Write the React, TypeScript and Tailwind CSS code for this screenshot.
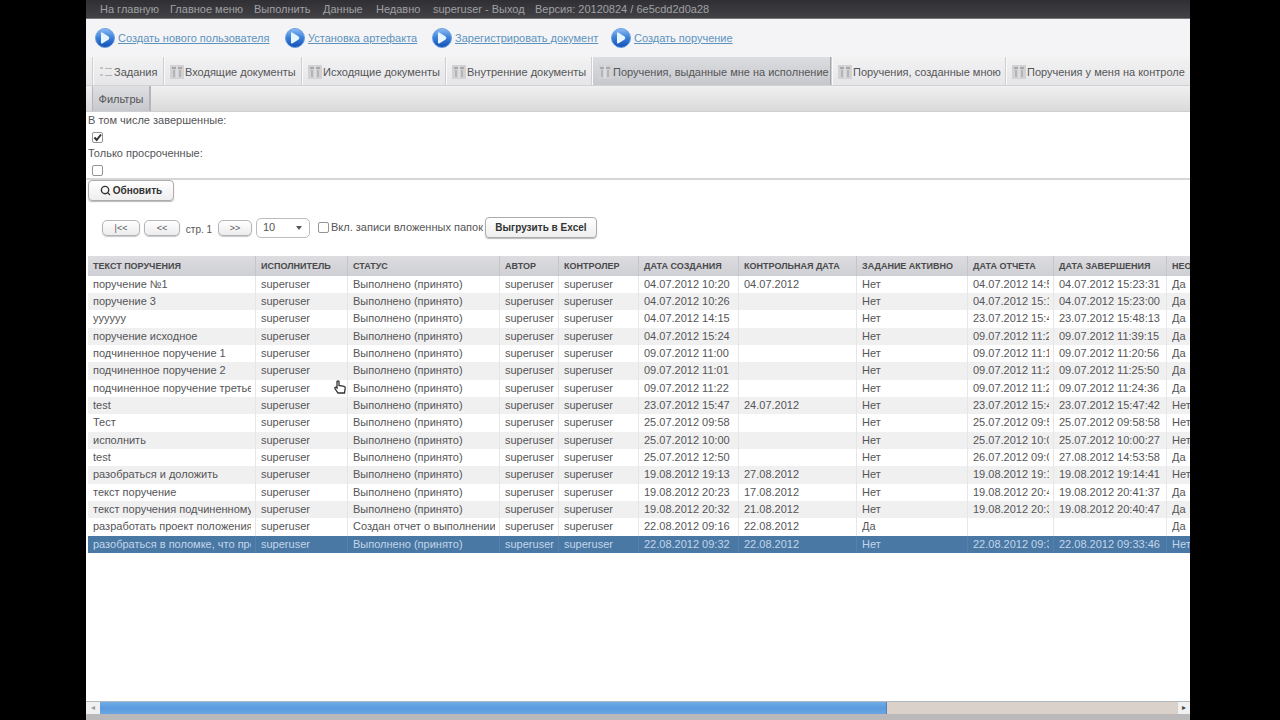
import React from 'react';
import { Search } from 'lucide-react';
import clsx from 'clsx';

const menuItems = [
  { label: 'На главную', width: 'w-[70px]' },
  { label: 'Главное меню', width: 'w-[84px]' },
  { label: 'Выполнить', width: 'w-[69px]' },
  { label: 'Данные', width: 'w-[53px]' },
  { label: 'Недавно', width: 'w-[57px]' },
  { label: 'superuser - Выход', width: 'w-[102px]' },
];

const actions = [
  { label: 'Создать нового пользователя', width: 'w-[190px]' },
  { label: 'Установка артефакта', width: 'w-[147px]' },
  { label: 'Зарегистрировать документ', width: 'w-[179px]' },
  { label: 'Создать поручение', width: 'w-[160px]' },
];

const tabs = [
  { label: 'Задания', width: 'w-[71px]', icon: 'list' },
  { label: 'Входящие документы', width: 'w-[138px]', icon: 'grid' },
  { label: 'Исходящие документы', width: 'w-[144px]', icon: 'grid' },
  { label: 'Внутренние документы', width: 'w-[146px]', icon: 'grid' },
  { label: 'Поручения, выданные мне на исполнение', width: 'w-[240px]', icon: 'grid', active: true },
  { label: 'Поручения, созданные мною', width: 'w-[174px]', icon: 'grid' },
  { label: 'Поручения у меня на контроле', width: 'w-[185px]', icon: 'grid' },
];

const columns = [
  { label: 'ТЕКСТ ПОРУЧЕНИЯ', width: 'w-[168px]' },
  { label: 'ИСПОЛНИТЕЛЬ', width: 'w-[92px]' },
  { label: 'СТАТУС', width: 'w-[152px]' },
  { label: 'АВТОР', width: 'w-[59px]' },
  { label: 'КОНТРОЛЕР', width: 'w-[80px]' },
  { label: 'ДАТА СОЗДАНИЯ', width: 'w-[100px]' },
  { label: 'КОНТРОЛЬНАЯ ДАТА', width: 'w-[118px]' },
  { label: 'ЗАДАНИЕ АКТИВНО', width: 'w-[111px]' },
  { label: 'ДАТА ОТЧЕТА', width: 'w-[86px]' },
  { label: 'ДАТА ЗАВЕРШЕНИЯ', width: 'w-[113px]' },
  { label: 'НЕОБХОДИМ ОТЧЕТ', width: 'w-[121px]' },
];

const done = 'Выполнено (принято)';

// text, status, created, control date, active, reported, finished, report required
const rows = [
  ['поручение №1', done, '04.07.2012 10:20', '04.07.2012', 'Нет', '04.07.2012 14:58', '04.07.2012 15:23:31', 'Да'],
  ['поручение 3', done, '04.07.2012 10:26', '', 'Нет', '04.07.2012 15:19', '04.07.2012 15:23:00', 'Да'],
  ['уууууу', done, '04.07.2012 14:15', '', 'Нет', '23.07.2012 15:47', '23.07.2012 15:48:13', 'Да'],
  ['поручение исходное', done, '04.07.2012 15:24', '', 'Нет', '09.07.2012 11:28', '09.07.2012 11:39:15', 'Да'],
  ['подчиненное поручение 1', done, '09.07.2012 11:00', '', 'Нет', '09.07.2012 11:16', '09.07.2012 11:20:56', 'Да'],
  ['подчиненное поручение 2', done, '09.07.2012 11:01', '', 'Нет', '09.07.2012 11:24', '09.07.2012 11:25:50', 'Да'],
  ['подчиненное поручение третье', done, '09.07.2012 11:22', '', 'Нет', '09.07.2012 11:23', '09.07.2012 11:24:36', 'Да'],
  ['test', done, '23.07.2012 15:47', '24.07.2012', 'Нет', '23.07.2012 15:47', '23.07.2012 15:47:42', 'Нет'],
  ['Тест', done, '25.07.2012 09:58', '', 'Нет', '25.07.2012 09:58', '25.07.2012 09:58:58', 'Нет'],
  ['исполнить', done, '25.07.2012 10:00', '', 'Нет', '25.07.2012 10:00', '25.07.2012 10:00:27', 'Нет'],
  ['test', done, '25.07.2012 12:50', '', 'Нет', '26.07.2012 09:08', '27.08.2012 14:53:58', 'Да'],
  ['разобраться и доложить', done, '19.08.2012 19:13', '27.08.2012', 'Нет', '19.08.2012 19:14', '19.08.2012 19:14:41', 'Нет'],
  ['текст поручение', done, '19.08.2012 20:23', '17.08.2012', 'Нет', '19.08.2012 20:40', '19.08.2012 20:41:37', 'Да'],
  ['текст поручения подчиненному', done, '19.08.2012 20:32', '21.08.2012', 'Нет', '19.08.2012 20:39', '19.08.2012 20:40:47', 'Да'],
  ['разработать проект положения', 'Создан отчет о выполнении', '22.08.2012 09:16', '22.08.2012', 'Да', '', '', 'Да'],
  ['разобраться в поломке, что пре', done, '22.08.2012 09:32', '22.08.2012', 'Нет', '22.08.2012 09:33', '22.08.2012 09:33:46', 'Нет'],
];

const PlayIcon = () => (
  <svg className="size-5 shrink-0" viewBox="0 0 20 20" aria-hidden="true">
    <defs>
      <linearGradient id="ball" x1="0" y1="0" x2="0" y2="1">
        <stop offset="0" stopColor="#8fbdf2" />
        <stop offset="0.45" stopColor="#3f83dc" />
        <stop offset="1" stopColor="#124db4" />
      </linearGradient>
    </defs>
    <circle cx="10" cy="10" r="9.5" fill="url(#ball)" stroke="#6aa0e2" strokeWidth="1" />
    <path d="M6 5.2 Q6 4.2 7.2 4.4 L13.6 8.4 Q15.2 10 13.6 11.6 L7.2 15.4 Q6 15.8 6 14.8 Z" fill="#e6f6ff" />
  </svg>
);

const TabIcon = ({ kind }: { kind: string }) => (
  <svg className="h-3.5 w-3.5 shrink-0" viewBox="0 0 14 14" fill="none" aria-hidden="true">
    {kind === 'list' ? (
      <>
        <path d="M1 2h3v2H1zM1 9h3v2H1z" fill="#c4c4c6" />
        <path d="M6 3.5h7M6 10.5h7" stroke="#b4b4b6" />
      </>
    ) : (
      <>
        <rect x="0" y="0" width="14" height="14" fill="#d2d2d4" />
        <path d="M2 3h4M8 3h4" stroke="#a8a8aa" strokeWidth="2" />
        <path d="M4 5v7M10 5v7" stroke="#b4b4b6" strokeWidth="2" />
        <path d="M7 1v12" stroke="#e8e8ea" />
      </>
    )}
  </svg>
);

interface CheckProps {
  id: string;
  defaultChecked?: boolean;
}

const Check: React.FC<CheckProps> = ({ id, defaultChecked }) => (
  <span className="grid size-[11px] shrink-0">
    <input
      id={id}
      type="checkbox"
      defaultChecked={defaultChecked}
      className="peer col-start-1 row-start-1 size-[11px] appearance-none rounded-[2px] border border-[#949496] bg-white"
    />
    <svg
      className="pointer-events-none invisible col-start-1 row-start-1 size-[11px] peer-checked:visible"
      viewBox="0 0 11 11"
      fill="none"
      aria-hidden="true"
    >
      <path d="M2.5 5.5 L4.7 8 L9 2.5" stroke="#333" strokeWidth="2" />
    </svg>
  </span>
);

const PagerButton = ({ children, label }: { children: React.ReactNode; label: string }) => (
  <button
    type="button"
    aria-label={label}
    className="h-4 rounded-[5px] border border-[#b4b4b6] bg-gradient-to-b from-white to-[#ececee] text-[9px] leading-3 text-[#555] shadow-[0_1px_1px_#c8c8ca]"
  >
    {children}
  </button>
);

const App: React.FC = () => {
  return (
    <div className="min-h-screen bg-black pr-[90px] pl-[86px] font-['Liberation_Sans',Arial,sans-serif] text-[11px] text-[#555557]">
      <div className="relative flex min-h-screen flex-col overflow-hidden bg-white">
        <nav className="flex h-[19px] items-center border-b border-[#77777a] bg-gradient-to-b from-[#303034] to-[#424246] pl-3.5 text-[11px] leading-4 whitespace-nowrap text-[#a0a0a3]">
          {menuItems.map((item) => (
            <a key={item.label} href="#" className={clsx('shrink-0', item.width)}>
              {item.label}
            </a>
          ))}
          <span>Версия: 20120824 / 6e5cdd2d0a28</span>
        </nav>

        <div className="flex h-[38px] items-center bg-[#f4f4f7] pl-[9px]">
          {actions.map((action) => (
            <div key={action.label} className={clsx('flex shrink-0 items-center gap-[3px]', action.width)}>
              <PlayIcon />
              <a href="#" className="text-[11px] whitespace-nowrap text-[#5c93bd] underline">
                {action.label}
              </a>
            </div>
          ))}
        </div>

        <div className="flex h-[29px] overflow-hidden border-b border-[#d2d2d4] bg-gradient-to-b from-[#f2f2f3] to-[#e6e6e8] pl-1.5">
          {tabs.map((tab) => (
            <button
              key={tab.label}
              type="button"
              className={clsx(
                'flex shrink-0 items-center gap-px border-l border-[#cfcfd1] pt-0.5 pl-1.5 whitespace-nowrap shadow-[inset_1px_0_0_#fafafa]',
                tab.width,
                tab.active && 'border-r border-r-[#a5a5a8] bg-gradient-to-b from-[#dcdde0] to-[#c6c8cd]',
              )}
            >
              <TabIcon kind={tab.icon} />
              {tab.label}
            </button>
          ))}
        </div>

        <div className="flex h-[26px] border-b border-[#cfcfd1] bg-gradient-to-b from-[#f0f0f1] to-[#dadadb] pl-1.5">
          <button type="button" className="w-[59px] border-r-2 border-l border-[#b4b5b9] bg-gradient-to-b from-[#dfe0e3] to-[#c6c8cd] pt-0.5">
            Фильтры
          </button>
        </div>

        <div className="flex h-[68px] flex-col border-b-2 border-[#d6d6d7] pl-0.5">
          <label htmlFor="completed" className="leading-[17px]">В том числе завершенные:</label>
          <span className="flex h-4 items-center pl-1">
            <Check id="completed" defaultChecked />
          </span>
          <label htmlFor="overdue" className="leading-[17px]">Только просроченные:</label>
          <span className="flex h-4 items-center pl-1">
            <Check id="overdue" />
          </span>
        </div>

        <div className="pl-0.5">
          <button
            type="button"
            className="flex h-[21px] w-[86px] items-center justify-center gap-0.5 rounded-[4px] border border-[#acacae] bg-gradient-to-b from-white to-[#eeeeef] text-[10px] font-bold text-[#333] shadow-[0_1px_1px_#b8b8ba]"
          >
            <Search className="size-[11px]" strokeWidth={3} />
            Обновить
          </button>
        </div>

        <div className="flex h-[55px] items-center pb-0.5 pl-4 whitespace-nowrap">
          <div className="grid grid-cols-[38px_36px_30px_34px] items-center gap-x-1">
            <PagerButton label="Первая страница">|&lt;&lt;</PagerButton>
            <PagerButton label="Предыдущая страница">&lt;&lt;</PagerButton>
            <span className="pt-1 text-center text-[10px]">стр. 1</span>
            <PagerButton label="Следующая страница">&gt;&gt;</PagerButton>
          </div>
          <div className="ml-1 grid w-[54px] items-center">
            <select
              aria-label="Записей на странице"
              defaultValue="10"
              className="col-start-1 row-start-1 h-5 appearance-none rounded-[5px] border border-[#bcbcbe] bg-white pl-1.5 text-[11px]"
            >
              <option>10</option>
              <option>20</option>
              <option>50</option>
            </select>
            <svg className="pointer-events-none col-start-1 row-start-1 mr-2 h-1 w-1.5 justify-self-end" viewBox="0 0 6 4" aria-hidden="true">
              <path d="M0 0h6L3 4z" fill="#555" />
            </svg>
          </div>
          <label htmlFor="nested" className="ml-2 flex items-center gap-0.5">
            <Check id="nested" />
            Вкл. записи вложенных папок
          </label>
          <button
            type="button"
            className="ml-0.5 h-[21px] w-28 rounded-[4px] border border-[#acacae] bg-gradient-to-b from-white to-[#eeeeef] text-[10px] font-bold text-[#333] shadow-[0_1px_1px_#b8b8ba]"
          >
            Выгрузить в Excel
          </button>
        </div>

        <div className="ml-0.5 flex-1 overflow-hidden">
          <table className="w-[1200px] table-fixed border-separate border-spacing-0 text-left whitespace-nowrap">
            <thead>
              <tr className="h-5 bg-gradient-to-b from-[#dddde0] to-[#cecfd4] text-[9px] text-[#4a4a4c]">
                {columns.map((column) => (
                  <th key={column.label} className={clsx('border-r border-[#c6c6ca] p-0 pl-[5px] leading-[19px]', column.width)}>
                    {column.label}
                  </th>
                ))}
              </tr>
            </thead>
            <tbody>
              {rows.map(([text, status, ...dates], i) => (
                <tr
                  key={i}
                  className={clsx(
                    'h-[17px] nth-[3n]:h-[18px]',
                    i === rows.length - 1 ? 'bg-[#4a78a5] text-[#c3d6e8]' : 'even:bg-[#f0f0f1]',
                  )}
                >
                  {[text, 'superuser', status, 'superuser', 'superuser', ...dates].map((value, j) => (
                    <td
                      key={j}
                      className={clsx(
                        'border-r p-0 pr-1 pl-[5px] align-top leading-4',
                        i === rows.length - 1 ? 'border-[#5481ad]' : 'border-[#e6e6e8]',
                      )}
                    >
                      <div className="overflow-hidden">{value}</div>
                    </td>
                  ))}
                </tr>
              ))}
            </tbody>
          </table>
        </div>

        <div className="flex h-[13px] border-t border-[#b0b8c0] bg-[#dad2ca]">
          <button type="button" aria-label="Прокрутить влево" className="w-3.5 bg-[#f0f0f0] text-[8px] leading-3 text-[#999]">
            ◂
          </button>
          <div className="flex-1">
            <div className="h-3 w-[73%] border-r border-[#5380b0] bg-gradient-to-b from-[#70abe6] via-[#5a9ade] to-[#6aa5e0]" />
          </div>
          <button type="button" aria-label="Прокрутить вправо" className="w-3 bg-[#f0f0f0] text-[8px] leading-3 text-[#444]">
            ▸
          </button>
        </div>
        <div className="h-1.5 bg-[#bab8b9]" />

        <svg className="pointer-events-none absolute top-[380px] left-[248px] h-[14px] w-3" viewBox="0 0 12 14" aria-hidden="true">
          <path
            d="M3 1.5 Q4 .3 5 1.5 V5.5 L10 6.3 Q11.3 6.6 11.2 8 L10.5 13 H4 L.8 8.3 Q.6 7 2 7.2 L3 8 Z"
            fill="#fff"
            stroke="#333"
            strokeWidth="1.3"
          />
        </svg>
      </div>
    </div>
  );
};

export default App;
